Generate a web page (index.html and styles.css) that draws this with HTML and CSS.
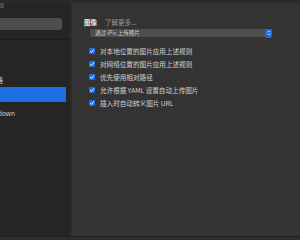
FILE: index.html
```html
<!DOCTYPE html>
<html lang="zh">
<head>
    <meta charset="UTF-8">
    <title>偏好设置</title>
    <link rel="stylesheet" href="styles.css">
</head>
<body>
    <div class="window">
        <div class="sidebar">
            <div class="sideTop"><span class="knob"></span></div>
            <div class="search"></div>
            <div class="divider"></div>
            <div class="item itemShort"><span class="label">表格</span></div>
            <div class="item selected"><span class="label">图像</span></div>
            <div class="item"><span class="label">Markdown</span></div>
        </div>
        <div class="main">
            <div class="mainTop"></div>
            <div class="section">
                <div class="heading">
                    <span class="title">图像</span>
                    <span class="more">了解更多...</span>
                </div>
                <div class="select">
                    <span class="selectText">通过 iPic 上传图片</span>
                    <span class="stepper">
                        <svg width="4" height="6" viewBox="0 0 4 6">
                            <path d="M0.8 2.3 L2 1 L3.2 2.3 M0.8 3.7 L2 5 L3.2 3.7" fill="none" stroke="#fff" stroke-width="0.7"/>
                        </svg>
                    </span>
                </div>
                <ul class="options">
                    <li class="option"><span class="check"><svg width="6" height="6" viewBox="0 0 6 6"><path d="M1.2 3.1 L2.5 4.4 L4.9 1.4" fill="none" stroke="#fff" stroke-width="1"/></svg></span>对本地位置的图片应用上述规则</li>
                    <li class="option"><span class="check"><svg width="6" height="6" viewBox="0 0 6 6"><path d="M1.2 3.1 L2.5 4.4 L4.9 1.4" fill="none" stroke="#fff" stroke-width="1"/></svg></span>对网络位置的图片应用上述规则</li>
                    <li class="option"><span class="check"><svg width="6" height="6" viewBox="0 0 6 6"><path d="M1.2 3.1 L2.5 4.4 L4.9 1.4" fill="none" stroke="#fff" stroke-width="1"/></svg></span>优先使用相对路径</li>
                    <li class="option"><span class="check"><svg width="6" height="6" viewBox="0 0 6 6"><path d="M1.2 3.1 L2.5 4.4 L4.9 1.4" fill="none" stroke="#fff" stroke-width="1"/></svg></span>允许根据 YAML 设置自动上传图片</li>
                    <li class="option"><span class="check"><svg width="6" height="6" viewBox="0 0 6 6"><path d="M1.2 3.1 L2.5 4.4 L4.9 1.4" fill="none" stroke="#fff" stroke-width="1"/></svg></span>插入时自动转义图片 URL</li>
                </ul>
            </div>
        </div>
    </div>
    <div class="bottomLine"></div>
</body>
</html>
```
FILE: styles.css
```css
body {
    margin: 0;
    width: 300px;
    height: 240px;
    overflow: hidden;
    background-color: #2e2e2e;
    font-family: "Noto Sans CJK SC", "Noto Sans", sans-serif;
    color: #d8d8d8;
}
.window {
    display: flex;
    height: 236px;
}
.sidebar {
    width: 70px;
    background-color: #252525;
    border-right: 2px solid #2c2c2c;
    overflow: hidden;
}
.sideTop {
    height: 3px;
    background-color: #2a2a2a;
    position: relative;
}
.knob {
    position: absolute;
    left: 0;
    top: 3px;
    width: 4px;
    height: 5px;
    background-color: #4a4a4a;
}
.search {
    margin-top: 15px;
    width: 62px;
    height: 12px;
    background-color: #4d4d4d;
    border-radius: 0 3px 3px 0;
}
.divider {
    margin-top: 9px;
    border-top: 1px solid #1c1c1c;
}
.item {
    height: 15px;
    display: flex;
    align-items: center;
    font-size: 6.5px;
    color: #d0d0d0;
    white-space: nowrap;
}
.label {
    margin-left: -17px;
}
.itemShort {
    margin-top: 33px;
    height: 14px;
}
.itemShort .label {
    margin-left: -10px;
}
.selected {
    width: 66px;
    background-color: #1c6ee2;
    margin-bottom: 3px;
}
.main {
    flex: 1;
    background-color: #333333;
}
.mainTop {
    height: 3px;
    background-color: #2b2b2b;
}
.section {
    padding: 14px 0 0 12px;
}
.heading {
    display: flex;
    align-items: center;
    height: 9px;
    font-size: 6.5px;
}
.title {
    font-weight: bold;
    color: #e8e8e8;
    width: 21px;
}
.more {
    color: #9a9a9a;
}
.select {
    margin: 3px 0 0 6px;
    width: 182px;
    height: 8px;
    background-color: #4e4e4e;
    border-radius: 2px;
    display: flex;
    align-items: center;
    justify-content: space-between;
}
.selectText {
    font-size: 5.5px;
    color: #d0d0d0;
    margin-left: 5px;
}
.stepper {
    width: 7px;
    height: 9px;
    background-color: #1c6ee2;
    border-radius: 2px;
    display: flex;
    align-items: center;
    justify-content: center;
}
.options {
    list-style: none;
    margin: 7px 0 0 5px;
    padding: 0;
}
.option {
    display: flex;
    align-items: center;
    height: 13px;
    font-size: 6.6px;
    color: #d4d4d4;
}
.check {
    width: 6px;
    height: 6px;
    border-radius: 1px;
    background-color: #1c6ee2;
    margin-right: 5px;
    display: flex;
}
.bottomLine {
    height: 1px;
    background-color: #1e1e1e;
}
```
